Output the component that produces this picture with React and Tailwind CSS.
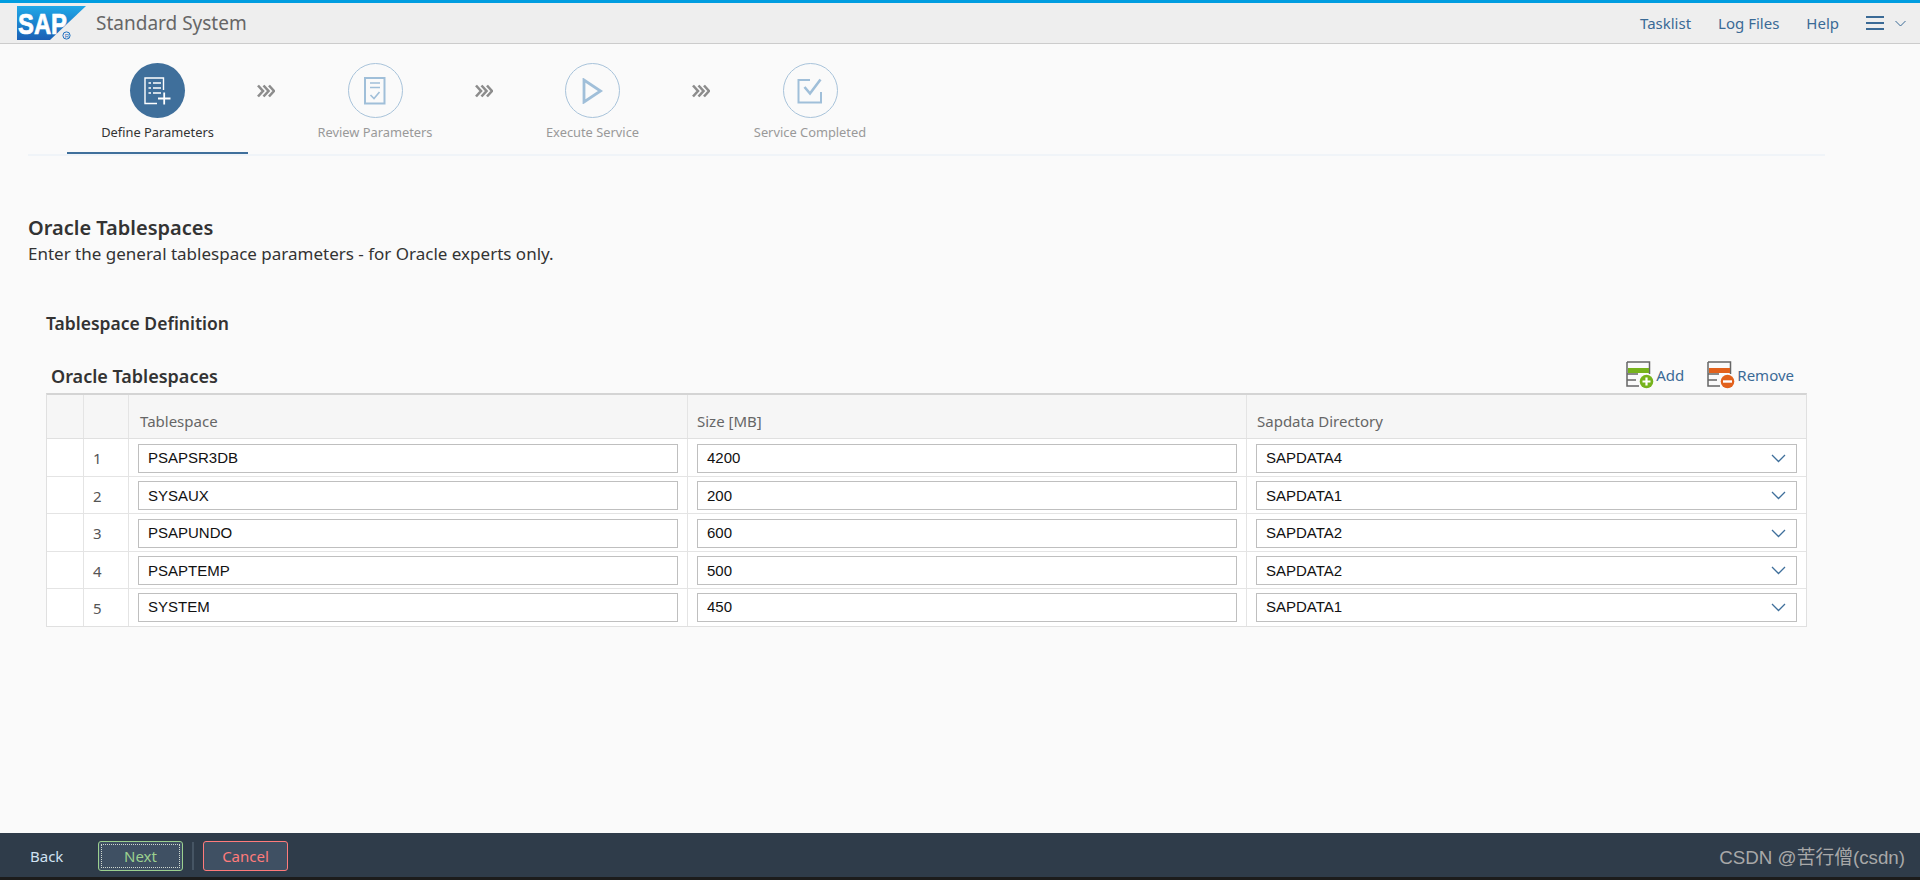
const rows = [
  ["1", "PSAPSR3DB", "4200", "SAPDATA4"],
  ["2", "SYSAUX", "200", "SAPDATA1"],
  ["3", "PSAPUNDO", "600", "SAPDATA2"],
  ["4", "PSAPTEMP", "500", "SAPDATA2"],
  ["5", "SYSTEM", "450", "SAPDATA1"],
];

const gridCols = "grid grid-cols-[37px_45px_559px_559px_1fr]";

function SapLogo() {
  return (
    <svg width="70" height="35" viewBox="0 0 70 35" className="shrink-0">
      <defs>
        <linearGradient id="sapg" x1="0" y1="0" x2="0" y2="1">
          <stop offset="0" stopColor="#1fa8e8" />
          <stop offset="1" stopColor="#1a5fb4" />
        </linearGradient>
      </defs>
      <polygon points="0,0 69,0 33,34 0,34" fill="url(#sapg)" />
      <text x="1" y="28" fill="#fff" stroke="#fff" strokeWidth="0.7" fontFamily="Liberation Sans, sans-serif" fontWeight="700" fontSize="29" textLength="49" lengthAdjust="spacingAndGlyphs">SAP</text>
      <circle cx="49.5" cy="29.5" r="3.6" fill="none" stroke="#1f70c1" strokeWidth="1" />
      <text x="47.8" y="31.6" fill="#1f70c1" fontFamily="Liberation Sans, sans-serif" fontSize="6">R</text>
    </svg>
  );
}

function Chevrons() {
  return (
    <svg width="18" height="14" viewBox="0 0 18 14" className="shrink-0" fill="none" stroke="#8c8c8c" strokeWidth="2.6">
      <path d="M1 1.5 L6 7 L1 12.5" />
      <path d="M6.5 1.5 L11.5 7 L6.5 12.5" />
      <path d="M12 1.5 L17 7 L12 12.5" />
    </svg>
  );
}

function DefineIcon() {
  return (
    <svg width="28" height="28" viewBox="0 0 28 28" fill="none" stroke="#fff" strokeWidth="1.4">
      <path d="M19.5 13 V1 H1 V26.5 H13" />
      <path d="M4.5 6 H7 M9 6 H17 M4.5 11 H7 M9 11 H17 M4.5 16 H7 M9 16 H17" strokeWidth="1.6" />
      <path d="M14 21.5 H26.5 M20.2 15.5 V27.5" strokeWidth="1.8" />
    </svg>
  );
}
function ReviewIcon() {
  return (
    <svg width="22" height="28" viewBox="0 0 22 28" fill="none" stroke="#a0bfd9" strokeWidth="2">
      <rect x="1" y="1" width="19.5" height="25.5" />
      <path d="M6 6 H16 M6 10.5 H16" strokeWidth="1.6" />
      <path d="M6.5 18 L10 21.5 L15.5 15" strokeWidth="1.6" />
    </svg>
  );
}
function PlayIcon() {
  return (
    <svg width="22" height="26" viewBox="0 0 22 26" fill="none" stroke="#a0bfd9" strokeWidth="2.8">
      <path d="M2 2 V24 L18.5 13 Z" />
    </svg>
  );
}
function DoneIcon() {
  return (
    <svg width="26" height="26" viewBox="0 0 26 26" fill="none" stroke="#a0bfd9" strokeWidth="2">
      <path d="M13 2 H1.5 V24.5 H24 V14" />
      <path d="M7.5 9 L13 15.5 L23.5 1.5" strokeWidth="2.6" />
    </svg>
  );
}

function Step({ label, active, children }) {
  return (
    <div className="relative w-[181px] h-[89px] flex flex-col items-center shrink-0">
      <div className={active
        ? "w-[55px] h-[55px] rounded-full bg-[#3f6f9b] flex items-center justify-center"
        : "w-[55px] h-[55px] rounded-full border border-[#a8c3da] flex items-center justify-center"}>
        {children}
      </div>
      <div className={active
        ? "mt-[5px] text-[12.85px] leading-[18px] text-[#333333]"
        : "mt-[5px] text-[12.85px] leading-[18px] text-[#999999]"}>{label}</div>
      {active && <div className="absolute left-0 right-0 bottom-[-2px] h-[2px] bg-[#3f6f9b]" />}
    </div>
  );
}

function TableIcon({ color }) {
  return (
    <svg width="28" height="28" viewBox="0 0 28 28" className="shrink-0">
      <path d="M1 1 H23.5 V13 M1 1 V25 H13 M1 13 H12 M1 19 H10" fill="none" stroke="#666" strokeWidth="1.5" />
      <rect x="2" y="7" width="21" height="5" fill={color} />
      <circle cx="20.5" cy="20.5" r="6.8" fill={color} />
      {color === "#76b31c"
        ? <path d="M16.5 20.5 H24.5 M20.5 16.5 V24.5" stroke="#fff" strokeWidth="2.2" />
        : <path d="M16 20.5 H25" stroke="#fff" strokeWidth="2.4" />}
    </svg>
  );
}

function Field({ value, select, lastRow }) {
  return (
    <div className={lastRow
      ? "px-[9px] h-full flex items-center border-r border-[#e4e4e4] last:border-r-0"
      : "px-[9px] pt-[2px] h-full flex items-center border-r border-[#e4e4e4] last:border-r-0"}>
      <div className="w-full h-[29px] bg-white border border-[#bfbfbf] flex items-center justify-between pl-[9px] pr-[10px] text-[15px] text-[#111111] font-['Liberation_Sans',sans-serif]">
        <span>{value}</span>
        {select && (
          <svg width="15" height="9" viewBox="0 0 15 9" fill="none" stroke="#3f6f9b" strokeWidth="1.3">
            <path d="M1 1 L7.5 7.5 L14 1" />
          </svg>
        )}
      </div>
    </div>
  );
}

export default function App() {
  return (
    <div className="h-screen w-full flex flex-col bg-[#fafafa] font-['Noto_Sans',sans-serif] overflow-hidden">
      <header className="h-[44px] shrink-0 bg-[#eeeeee] border-t-[3px] border-t-[#009de0] border-b border-b-[#cccccc] flex items-center pl-[17px] pr-[14px]">
        <SapLogo />
        <div className="ml-[9px] text-[19px] text-[#666666]">Standard System</div>
        <nav className="ml-auto flex items-center text-[15px] text-[#3a6a96]">
          <span>Tasklist</span>
          <span className="ml-[27px]">Log Files</span>
          <span className="ml-[27px]">Help</span>
          <svg width="18" height="14" viewBox="0 0 18 14" className="ml-[27px]" stroke="#3a6a96" strokeWidth="2">
            <path d="M0 1 H18 M0 7 H18 M0 13 H18" />
          </svg>
          <svg width="11" height="7" viewBox="0 0 11 7" className="ml-[11px]" fill="none" stroke="#3a6a96" strokeWidth="1">
            <path d="M.5 1 L5.5 6 L10.5 1" />
          </svg>
        </nav>
      </header>

      <main className="flex-1 min-h-0 pl-[28px] pr-[95px]">
        <div className="mt-[19px] h-[93px] pl-[39px] flex items-start border-b-2 border-[#f0f4f8]">
          <Step label="Define Parameters" active><DefineIcon /></Step>
          <div className="w-[36.5px] h-[55px] flex items-center justify-center shrink-0"><Chevrons /></div>
          <Step label="Review Parameters"><ReviewIcon /></Step>
          <div className="w-[36.5px] h-[55px] flex items-center justify-center shrink-0"><Chevrons /></div>
          <Step label="Execute Service"><PlayIcon /></Step>
          <div className="w-[36.5px] h-[55px] flex items-center justify-center shrink-0"><Chevrons /></div>
          <Step label="Service Completed"><DoneIcon /></Step>
        </div>

        <h1 className="mt-[59px] text-[20px] leading-[26px] font-semibold text-[#333333]">Oracle Tablespaces</h1>
        <p className="mt-[1px] text-[17px] leading-[24px] text-[#333333]">Enter the general tablespace parameters - for Oracle experts only.</p>

        <section className="ml-[18px] mr-[18px]">
          <h2 className="mt-[45px] text-[17.5px] leading-[24px] font-semibold text-[#333333]">Tablespace Definition</h2>
          <div className="mt-[22px] h-[36px] flex items-center pl-[5px] pr-[13px]">
            <div className="pt-[2px] text-[18px] font-semibold text-[#333333]">Oracle Tablespaces</div>
            <div className="ml-auto flex items-center text-[15px] text-[#3a6a96]">
              <TableIcon color="#76b31c" />
              <span className="ml-[2px]">Add</span>
              <span className="ml-[23px]"><TableIcon color="#e2611c" /></span>
              <span className="ml-[2px]">Remove</span>
            </div>
          </div>

          <div className="border-t-2 border-x border-b border-t-[#d4d4d4] border-x-[#e0e0e0] border-b-[#e0e0e0]">
            <div className={`${gridCols} h-[44px] bg-[#f6f6f6] text-[15px] text-[#666666] border-b border-[#e0e0e0]`}>
              <div className="border-r border-[#e4e4e4]" />
              <div className="border-r border-[#e4e4e4]" />
              <div className="border-r border-[#e4e4e4] pl-[11px] flex items-center pt-[10px]">Tablespace</div>
              <div className="border-r border-[#e4e4e4] pl-[9px] flex items-center pt-[10px]">Size [MB]</div>
              <div className="pl-[10px] flex items-center pt-[10px]">Sapdata Directory</div>
            </div>
            {rows.map((r, i) => {
              const lastRow = i === rows.length - 1;
              return (
                <div key={r[0]} className={lastRow
                  ? `${gridCols} h-[37px] items-center bg-white`
                  : `${gridCols} h-[37.5px] items-center bg-white border-b border-[#e4e4e4]`}>
                  <div className="h-full border-r border-[#e4e4e4]" />
                  <div className="h-full border-r border-[#e4e4e4] pl-[9px] pt-[2px] flex items-center text-[15px] text-[#555555]">{r[0]}</div>
                  <Field value={r[1]} lastRow={lastRow} />
                  <Field value={r[2]} lastRow={lastRow} />
                  <Field value={r[3]} lastRow={lastRow} select />
                </div>
              );
            })}
          </div>
        </section>
      </main>

      <footer className="h-[47px] shrink-0 bg-[#2f3c4a] border-b-[3px] border-b-[#1c1c1c] flex items-center pt-[2px] pl-[30px] pr-[15px] text-[15px]">
        <span className="text-[#d1e2f2] w-[68px]">Back</span>
        <div className="w-[85px] h-[30px] rounded-[3px] bg-[#3f5063] border border-[#9bd08f] p-[2px]">
          <div className="w-full h-full border border-dotted border-[#d0d8d0] flex items-center justify-center text-[#9bd08f]">Next</div>
        </div>
        <div className="ml-[9px] w-[2px] h-[28px] bg-[#465564]" />
        <div className="ml-[9px] w-[85px] h-[30px] rounded-[3px] bg-[#3f5063] border border-[#ff7b7b] flex items-center justify-center text-[#ff7b7b]">Cancel</div>
        <div className="ml-auto mt-[4px] text-[18.75px] leading-[24px] text-[#a8a8a8] font-['Liberation_Sans','Noto_Sans_CJK_SC',sans-serif]">CSDN @苦行僧(csdn)</div>
      </footer>
    </div>
  );
}
